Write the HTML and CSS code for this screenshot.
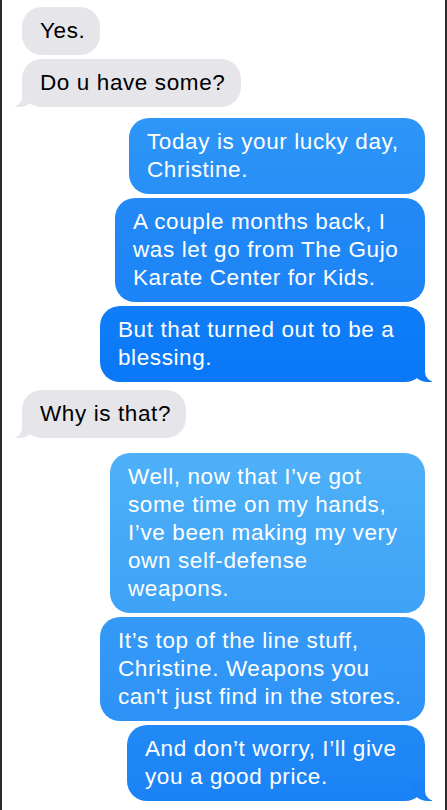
FILE: index.html
```html
<!DOCTYPE html>
<html>
<head>
<meta charset="utf-8">
<link rel="stylesheet" href="styles.css">
</head>
<body>
<div class="screen">
  <div class="thread">
    <div class="bubble in w-yes">Yes.</div>
    <div class="bubble in tail w-do">Do u have some?</div>

    <div class="bubble out c1 w-today group">Today is your lucky day,<br>Christine.</div>
    <div class="bubble out c2 w-couple">A couple months back, I<br>was let go from The Gujo<br>Karate Center for Kids.</div>
    <div class="bubble out c3 tail w-but">But that turned out to be a<br>blessing.</div>

    <div class="bubble in tail w-why why">Why is that?</div>

    <div class="bubble out c4 w-well well">Well, now that I’ve got<br>some time on my hands,<br>I’ve been making my very<br>own self-defense<br>weapons.</div>
    <div class="bubble out c5 w-top">It’s top of the line stuff,<br>Christine. Weapons you<br>can't just find in the stores.</div>
    <div class="bubble out c6 tail w-worry">And don’t worry, I’ll give<br>you a good price.</div>
  </div>
</div>
</body>
</html>
```

FILE: styles.css
```css
html, body {
  margin: 0;
  padding: 0;
  background: #ffffff;
}

.screen {
  width: 447px;
  height: 810px;
  box-sizing: border-box;
  border-left: 2px solid #2b2b2b;
  border-right: 2px solid #2b2b2b;
  overflow: hidden;
  background: #ffffff;
}

.thread {
  display: flex;
  flex-direction: column;
  gap: 4px;
  padding: 7px 20px 0 20px;
}

.bubble {
  position: relative;
  box-sizing: border-box;
  padding: 10px 6px 10px 18px;
  border-radius: 20px;
  font-family: "Liberation Sans", Arial, "Helvetica Neue", sans-serif;
  font-size: 22.5px;
  line-height: 28px;
  letter-spacing: 0.6px;
  white-space: nowrap;
}

.bubble.in {
  align-self: flex-start;
  background: #e5e5ea;
  color: #000000;
  --tail: #e5e5ea;
}

.bubble.out {
  align-self: flex-end;
  color: #ffffff;
}

.group { margin-top: 7px; }
.why { margin-top: 4px; }
.well { margin-top: 11px; }

/* widths */
.w-yes { width: 78px; }
.w-do { width: 219px; }
.w-why { width: 164px; }
.w-today { width: 296px; }
.w-couple { width: 310px; }
.w-but { width: 325px; }
.w-well { width: 315px; }
.w-top { width: 325px; }
.w-worry { width: 298px; }

/* blue shades */
.c1 { background: linear-gradient(#2d96f7, #278ff6); --tail: #278ff6; }
.c2 { background: linear-gradient(#2389f6, #1c84f6); --tail: #1c84f6; }
.c3 { background: linear-gradient(#107df7, #0a78f7); --tail: #0a78f7; }
.c4 { background: linear-gradient(#4eb1f8, #3ea2f7); --tail: #3ea2f7; }
.c5 { background: linear-gradient(#359af6, #2d92f6); --tail: #2d92f6; }
.c6 { background: linear-gradient(#228af5, #1a82f5); --tail: #1a82f5; }

/* tails */
.tail::before,
.tail::after {
  content: "";
  position: absolute;
  bottom: 0;
  height: 20px;
}

.out.tail::before {
  right: -7px;
  width: 20px;
  background: var(--tail);
  border-bottom-left-radius: 16px 14px;
  z-index: 0;
}

.out.tail::after {
  right: -12px;
  width: 12px;
  background: #ffffff;
  border-bottom-left-radius: 10px;
  z-index: 1;
}

.in.tail::before {
  left: -7px;
  width: 20px;
  background: var(--tail);
  border-bottom-right-radius: 16px 14px;
  z-index: 0;
}

.in.tail::after {
  left: -12px;
  width: 12px;
  background: #ffffff;
  border-bottom-right-radius: 10px;
  z-index: 1;
}
```
